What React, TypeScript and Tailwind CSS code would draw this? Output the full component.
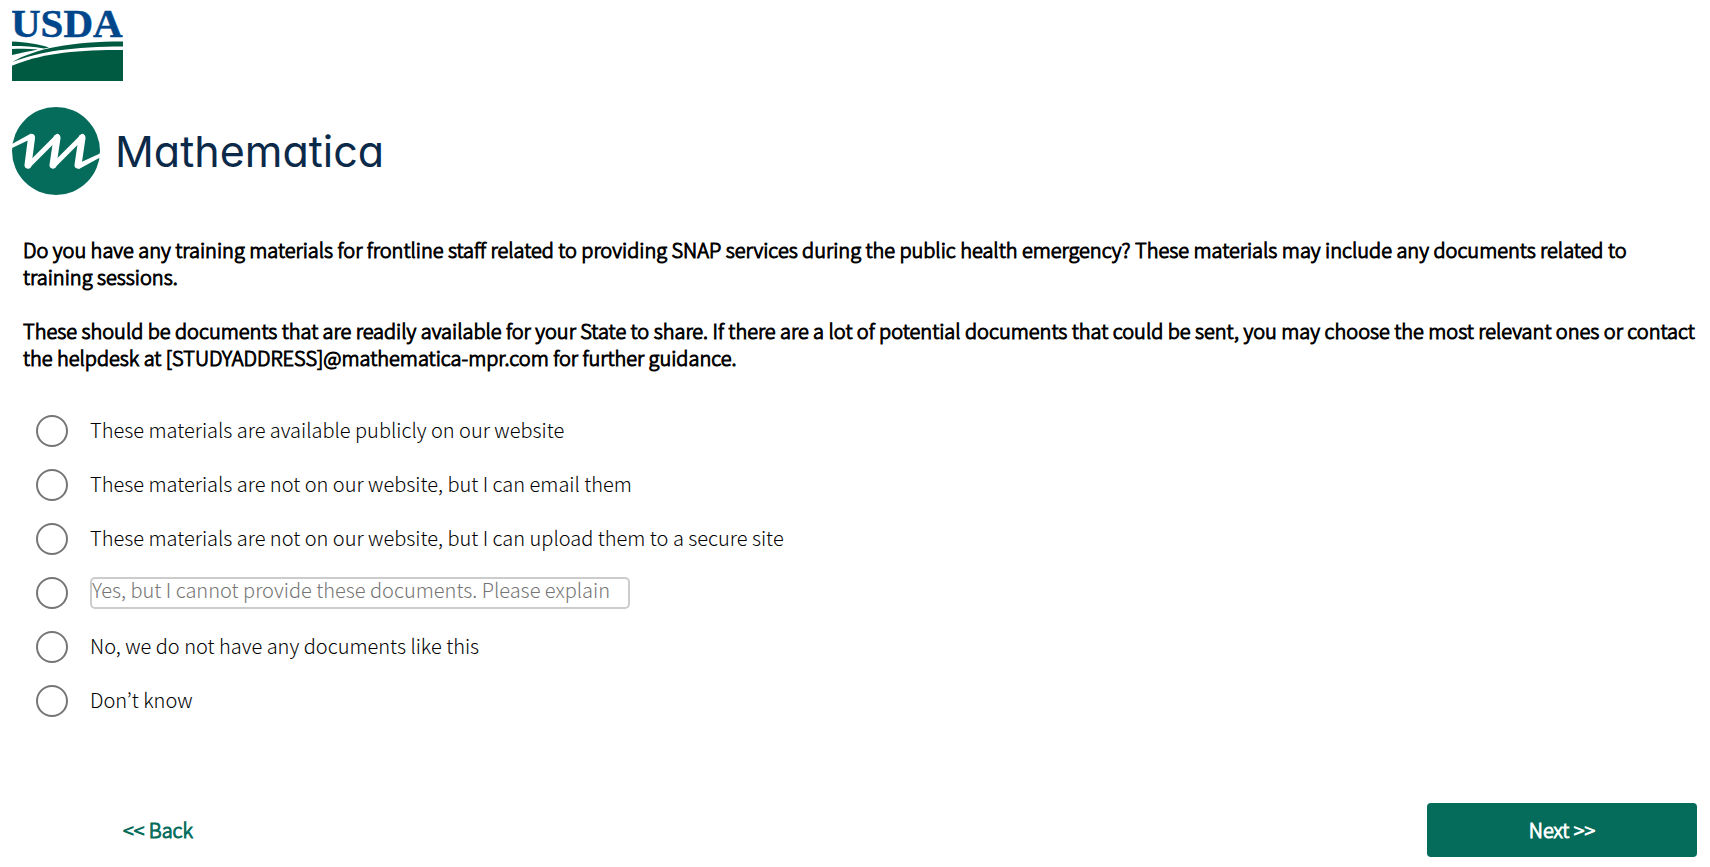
import React, { useState } from 'react';

const options = [
    { id: 'public', label: 'These materials are available publicly on our website' },
    { id: 'email', label: 'These materials are not on our website, but I can email them' },
    { id: 'upload', label: 'These materials are not on our website, but I can upload them to a secure site' },
    { id: 'cannot', label: 'Yes, but I cannot provide these documents. Please explain', explain: true },
    { id: 'none', label: 'No, we do not have any documents like this' },
    { id: 'unknown', label: 'Don’t know' },
];

const UsdaLogo: React.FC = () => (
    <svg width="114" height="82" viewBox="1 0 114 82" role="img" aria-label="USDA">
        <text x="0" y="37" fontSize="41" fontWeight="700" fill="#00468b" stroke="#00468b" strokeWidth="0.500" fontFamily="'Liberation Serif', serif">USDA</text>
        <g fill="#005941">
            <path d="M0.500 41.500C14 42 28 44 38 47.500L33 48.500C23 46.500 12 46 0.500 46Z" />
            <path d="M0.500 49C10 48.500 19 48.500 27 49.500C17 51.500 8 53.500 0.500 55Z" />
            <path d="M0.500 62.500C24 48.500 60 41.500 112 41.500V46.500C62 46.500 28 51.500 0.500 62.500Z" />
            <path d="M0.500 66C28 54 64 49.500 112 50V81H0.500Z" />
        </g>
    </svg>
);

const MathematicaLogo: React.FC = () => (
    <div className="flex items-center gap-[15px]">
        <svg width="88" height="88" viewBox="0 0 88 88" aria-hidden="true">
            <circle cx="44" cy="44" r="44" fill="#056c5b" />
            <g fill="none" stroke="#fff" strokeLinecap="round" strokeLinejoin="round">
                <path strokeWidth="5" d="M20 29.500L16 59L45.500 29.500L41 59L70.500 29.500L66 59" />
                <path strokeWidth="7" d="M19.500 31L16 58M45 31L41 58M70 31L66 58" />
            </g>
            <path fill="#fff" d="M0 37L19 26.500L22 30L19 32L0 41ZM65 57L88 46.500V50.500L67 62Z" />
        </svg>
        <span className="font-[Inter,sans-serif] text-[43px] leading-[52px] font-normal text-[#0b2949] [font-feature-settings:'cv11']">Mathematica</span>
    </div>
);

const App: React.FC = () => {
    const [selected, setSelected] = useState('');

    return (
        <div className="min-h-screen bg-white pl-3 pr-[13px] font-['Noto_Sans_CJK_KR',sans-serif] text-[20px] leading-[27px] font-light text-black">
            <header>
                <UsdaLogo />
                <div className="pt-[25px]">
                    <MathematicaLogo />
                </div>
            </header>

            <form className="pl-[11px] pt-[41px]" onSubmit={(e) => e.preventDefault()}>
                <fieldset>
                    <legend className="space-y-[27px] [-webkit-text-stroke:1px_#000]">
                        <p>
                            Do you have any training materials for frontline staff related to providing SNAP services during the public
                            health emergency? These materials may include any documents related to training sessions.
                        </p>
                        <p>
                            These should be documents that are readily available for your State to share. If there are a lot of potential
                            documents that could be sent, you may choose the most relevant ones or contact the helpdesk at
                            [STUDYADDRESS]@mathematica-mpr.com for further guidance.
                        </p>
                    </legend>

                    <div className="pl-[13px] pt-[33px]">
                        {options.map((option) => (
                            <div key={option.id} className="flex h-[54px] items-center gap-[22px]">
                                <input
                                    type="radio"
                                    id={option.id}
                                    name="materials"
                                    aria-label={option.label}
                                    checked={selected === option.id}
                                    onChange={() => setSelected(option.id)}
                                    className="size-8 appearance-none rounded-full border-2 border-[#767676] checked:border-8 checked:border-[#056c5b]"
                                />
                                {option.explain ? (
                                    <input
                                        type="text"
                                        aria-label={option.label}
                                        placeholder={option.label}
                                        onFocus={() => setSelected(option.id)}
                                        className="h-8 w-[540px] rounded-[5px] border-2 border-[#ccc] pb-2 placeholder:text-[#757575]"
                                    />
                                ) : (
                                    <label htmlFor={option.id} className="pb-1">{option.label}</label>
                                )}
                            </div>
                        ))}
                    </div>
                </fieldset>

                <div className="flex justify-between pb-2 pt-[75px]">
                    <button type="button" className="h-[54px] w-[270px] pb-[2px] text-[#056c5b] [-webkit-text-stroke:1px_#056c5b]">&lt;&lt; Back</button>
                    <button type="submit" className="h-[54px] w-[270px] rounded bg-[#056c5b] pb-[2px] text-white [-webkit-text-stroke:1px_#fff]">Next &gt;&gt;</button>
                </div>
            </form>
        </div>
    );
};

export default App;
